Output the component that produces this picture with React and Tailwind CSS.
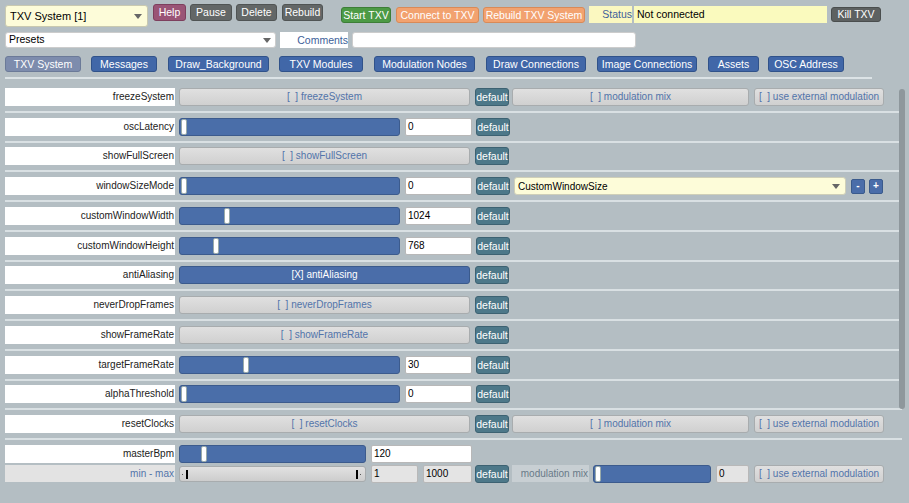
import React from 'react';

const Arrow = () => (
  <svg width="8" height="5" viewBox="0 0 8 5" className="shrink-0">
    <path d="M0 0 L8 0 L4 5 Z" fill="#666" />
  </svg>
);

const Label = ({ text }) => (
  <div className="w-[170px] h-[18px] bg-white text-right pr-[1px] leading-[18px] text-[#222] shrink-0 whitespace-nowrap">{text}</div>
);

const DefaultBtn = ({ ml = 'ml-[5px]' }) => (
  <div className={`${ml} w-[34px] h-[18px] shrink-0 rounded-[3px] bg-[#4d7889] border border-[#3d6272] text-white text-center leading-[16px] text-[10.5px]`}>default</div>
);

const Toggle = ({ text, on, w = 'w-[291px]', ml = 'ml-[4px]' }) => (
  <div className={`${ml} ${w} h-[18px] shrink-0 whitespace-nowrap rounded-[3px] border text-center leading-[16px] ${on ? 'bg-[#4a6da9] border-[#3a5a8c] text-white' : 'bg-gradient-to-b from-[#e0e0e0] to-[#d0d0d0] border-[#a8acae] text-[#5274aa]'}`}>
    {text}
  </div>
);

const Slider = ({ pos, w = 'w-[221px]' }) => (
  <div className={`ml-[4px] ${w} h-[18px] shrink-0 relative rounded-[3px] bg-[#4a6ea9] border border-[#3c5b8d]`}>
    <div className="absolute top-[0px] w-[6px] h-[16px] bg-white rounded-[2px] border border-[#9aa]" style={{ left: pos }} />
  </div>
);

const NumInput = ({ value, w = 'w-[67px]', ml = 'ml-[5px]', gray }) => (
  <div className={`${ml} ${w} h-[18px] shrink-0 border border-[#b8b8b8] rounded-[2px] pl-[2px] leading-[16px] text-black ${gray ? 'bg-[#e4e4e4]' : 'bg-white'}`}>{value}</div>
);

const ModMix = () => <Toggle text={'[\u00a0\u00a0] modulation mix'} w="w-[237px]" ml="ml-[3px]" />;
const ExtMod = () => <Toggle text={'[\u00a0\u00a0] use external modulation'} w="w-[130px]" ml="ml-[5px]" />;

const Row = ({ children }) => (
  <div className="h-[29.75px] flex items-center border-b-2 border-[#d9e0e3]">{children}</div>
);

const tabs = ['Messages', 'Draw_Background', 'TXV Modules', 'Modulation Nodes', 'Draw Connections', 'Image Connections', 'Assets', 'OSC Address'];
const tabW = ['w-[66px]', 'w-[101px]', 'w-[84px]', 'w-[101px]', 'w-[100px]', 'w-[100px]', 'w-[51px]', 'w-[76px]'];
const tabMl = ['ml-[10px]', 'ml-[11px]', 'ml-[10px]', 'ml-[11px]', 'ml-[11px]', 'ml-[11px]', 'ml-[11px]', 'ml-[9px]'];

export default function App() {
  return (
    <div className="relative w-[909px] h-[503px] overflow-hidden bg-[#b4bec3] font-['Liberation_Sans',Arial,sans-serif] text-[10px]">
      <div className="pl-[5px] pt-[4px]">
        {/* Top bar */}
        <div className="h-[28px] flex items-start text-[10.5px] whitespace-nowrap">
          <div className="mt-[1px] w-[143px] h-[22px] rounded-[3px] border border-[#c9c9b0] bg-[#fdfcd9] flex items-center justify-between pl-[4px] pr-[5px] text-black text-[11px]">
            <span>TXV System [1]</span>
            <Arrow />
          </div>
          <div className="ml-[5px] w-[33px] h-[17px] rounded-[3px] bg-[#9a5476] border border-[#7d3f5d] text-white text-center leading-[15px]">Help</div>
          <div className="ml-[4px] w-[42px] h-[17px] rounded-[3px] bg-[#636767] border border-[#505454] text-white text-center leading-[15px]">Pause</div>
          <div className="ml-[4px] w-[41px] h-[17px] rounded-[3px] bg-[#636767] border border-[#505454] text-white text-center leading-[15px]">Delete</div>
          <div className="ml-[5px] w-[41px] h-[17px] rounded-[3px] bg-[#636767] border border-[#505454] text-white text-center leading-[15px]">Rebuild</div>
          <div className="mt-[3px] ml-[18px] w-[50px] h-[16px] rounded-[3px] bg-[#4c9a45] border border-[#3d7e38] text-white text-center leading-[14px]">Start TXV</div>
          <div className="mt-[3px] ml-[5px] w-[83px] h-[16px] rounded-[3px] bg-[#f2a26f] border border-[#d88a58] text-white text-center leading-[14px]">Connect to TXV</div>
          <div className="mt-[3px] ml-[4px] w-[102px] h-[16px] rounded-[3px] bg-[#f2a26f] border border-[#d88a58] text-white text-center leading-[14px]">Rebuild TXV System</div>
          <div className="mt-[2px] ml-[4px] w-[43px] h-[17px] bg-[#fbf8c0] text-[#3d5f9a] text-right leading-[17px]">Status</div>
          <div className="mt-[2px] ml-[2px] w-[193px] h-[17px] bg-[#fafabe] text-black pl-[3px] leading-[17px]">Not connected</div>
          <div className="mt-[3px] ml-[4px] w-[50px] h-[15px] rounded-[3px] bg-[#5d6161] border border-[#4a4e4e] text-white text-center leading-[13px]">Kill TXV</div>
        </div>

        {/* Presets row */}
        <div className="h-[16px] flex items-start text-[10.5px]">
          <div className="w-[271px] h-[16px] rounded-[3px] bg-white border border-[#ccc] flex items-center justify-between pl-[3px] pr-[4px] text-black">
            <span>Presets</span>
            <Arrow />
          </div>
          <div className="ml-[4px] w-[68px] h-[16px] bg-white text-right text-[#3d5f9a] leading-[16px]">Comments</div>
          <div className="ml-[4px] w-[284px] h-[16px] bg-white rounded-[3px] border border-[#ccc]" />
        </div>

        {/* Tabs */}
        <div className="mt-[8px] h-[16px] flex items-start text-[10.5px] whitespace-nowrap">
          <div className="w-[76px] h-[16px] rounded-[3px] bg-[#7d8cad] border border-[#6b7a98] text-white text-center leading-[14px]">TXV System</div>
          {tabs.map((t, i) => (
            <div key={t} className={`${tabMl[i]} ${tabW[i]} h-[16px] rounded-[3px] bg-[#4167a8] border border-[#30528a] text-white text-center leading-[14px]`}>{t}</div>
          ))}
        </div>
        <div className="mt-[5px] w-[867px] h-[2px] bg-[#dce3e6]" />

        {/* Parameter rows */}
        <div className="mt-[4px] w-[897px]">
          <Row>
            <Label text="freezeSystem" />
            <Toggle text={'[\u00a0\u00a0] freezeSystem'} />
            <DefaultBtn />
            <ModMix />
            <ExtMod />
          </Row>
          <Row>
            <Label text="oscLatency" />
            <Slider pos="1px" />
            <NumInput value="0" />
            <DefaultBtn ml="ml-[4px]" />
          </Row>
          <Row>
            <Label text="showFullScreen" />
            <Toggle text={'[\u00a0\u00a0] showFullScreen'} />
            <DefaultBtn />
          </Row>
          <Row>
            <Label text="windowSizeMode" />
            <Slider pos="1px" />
            <NumInput value="0" />
            <DefaultBtn ml="ml-[4px]" />
            <div className="ml-[4px] w-[332px] h-[18px] rounded-[3px] border border-[#cfcfb8] bg-[#fdfcd9] flex items-center justify-between pl-[3px] pr-[5px] text-black">
              <span>CustomWindowSize</span>
              <Arrow />
            </div>
            <div className="ml-[5px] w-[14px] h-[15px] rounded-[2px] bg-[#4a6da9] border border-[#3a5a8c] text-white text-center leading-[12px] font-bold">-</div>
            <div className="ml-[4px] w-[14px] h-[15px] rounded-[2px] bg-[#4a6da9] border border-[#3a5a8c] text-white text-center leading-[12px] font-bold">+</div>
          </Row>
          <Row>
            <Label text="customWindowWidth" />
            <Slider pos="44px" />
            <NumInput value="1024" />
            <DefaultBtn ml="ml-[4px]" />
          </Row>
          <Row>
            <Label text="customWindowHeight" />
            <Slider pos="33px" />
            <NumInput value="768" />
            <DefaultBtn ml="ml-[4px]" />
          </Row>
          <Row>
            <Label text="antiAliasing" />
            <Toggle text="[X] antiAliasing" on />
            <DefaultBtn />
          </Row>
          <Row>
            <Label text="neverDropFrames" />
            <Toggle text={'[\u00a0\u00a0] neverDropFrames'} />
            <DefaultBtn />
          </Row>
          <Row>
            <Label text="showFrameRate" />
            <Toggle text={'[\u00a0\u00a0] showFrameRate'} />
            <DefaultBtn />
          </Row>
          <Row>
            <Label text="targetFrameRate" />
            <Slider pos="63px" />
            <NumInput value="30" />
            <DefaultBtn ml="ml-[4px]" />
          </Row>
          <Row>
            <Label text="alphaThreshold" />
            <Slider pos="1px" />
            <NumInput value="0" />
            <DefaultBtn ml="ml-[4px]" />
          </Row>
          <Row>
            <Label text="resetClocks" />
            <Toggle text={'[\u00a0\u00a0] resetClocks'} />
            <DefaultBtn />
            <ModMix />
            <ExtMod />
          </Row>

          <div className="pt-[5px] flex flex-col gap-[3px]">
            <div className="flex items-center h-[17px]">
              <Label text="masterBpm" />
              <Slider pos="21px" w="w-[187px]" />
              <NumInput value="120" w="w-[101px]" />
            </div>
            <div className="flex items-center h-[17px]">
              <div className="w-[170px] h-[17px] bg-[#e3e3e3] text-right pr-[1px] leading-[17px] text-[#5274aa] shrink-0">min - max</div>
              <div className="ml-[4px] w-[187px] h-[16px] shrink-0 relative rounded-[3px] bg-gradient-to-b from-[#e2e2e2] to-[#cdcdcd] border border-[#a8acae]">
                <div className="absolute left-[6px] top-[3px] w-[2px] h-[9px] bg-black" />
                <div className="absolute left-[2px] top-[7px] w-[1px] h-[1px] bg-[#555]" />
                <div className="absolute left-[176px] top-[3px] w-[2px] h-[9px] bg-black" />
                <div className="absolute left-[180px] top-[7px] w-[1px] h-[1px] bg-[#555]" />
              </div>
              <NumInput value="1" w="w-[47px]" gray />
              <NumInput value="1000" w="w-[49px]" gray />
              <DefaultBtn ml="ml-[3px]" />
              <div className="ml-[3px] w-[77px] h-[17px] bg-[#c8cfd3] text-right pr-[1px] leading-[17px] text-[#687a88] shrink-0 whitespace-nowrap">modulation mix</div>
              <Slider pos="1px" w="w-[118px]" />
              <NumInput value="0" w="w-[33px]" gray />
              <ExtMod />
            </div>
          </div>
        </div>
      </div>

      {/* scrollbar */}
      <div className="absolute left-[899px] top-[89px] w-[6px] h-[320px] rounded-[3px] bg-[#8e979c]" />
    </div>
  );
}
